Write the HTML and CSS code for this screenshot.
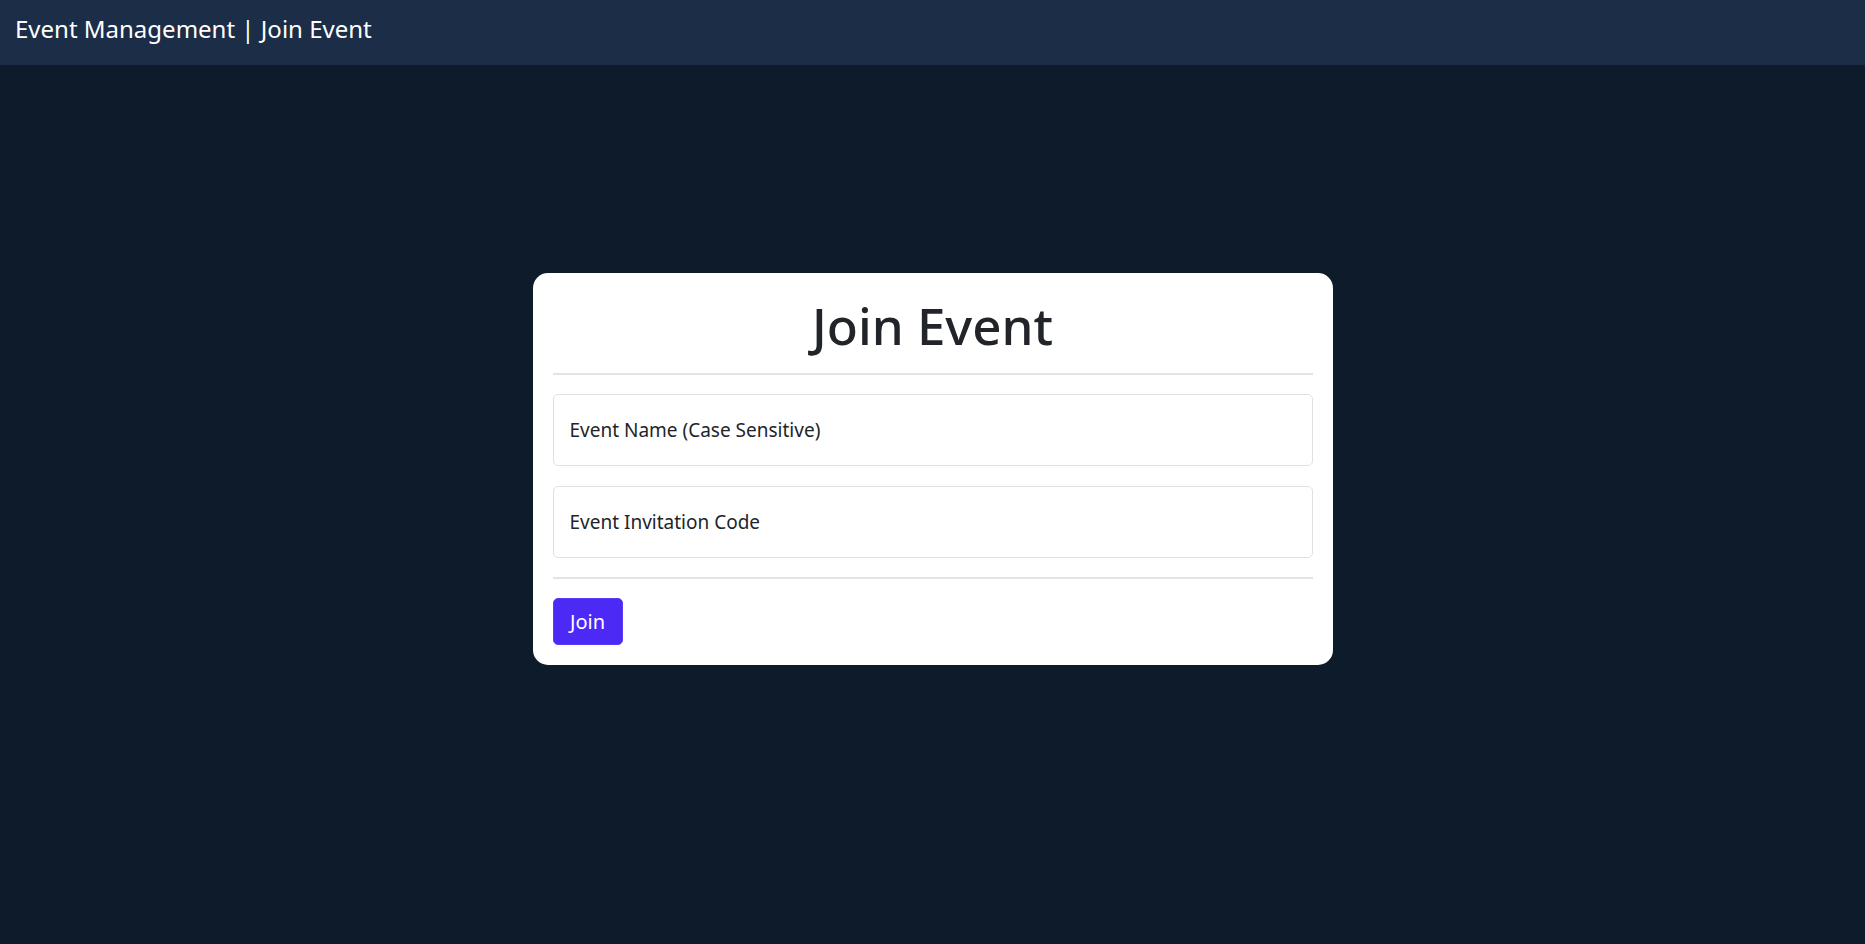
FILE: index.html
```html
<!DOCTYPE html>
<html lang="en">
<head>
<meta charset="utf-8">
<title>Event Management | Join Event</title>
<link rel="stylesheet" href="styles.css">
</head>
<body>
<nav class="navbar">
  <span class="brand">Event Management | Join Event</span>
</nav>
<main class="main">
  <form class="card">
    <h1 class="title">Join Event</h1>
    <hr class="rule">
    <input class="field" type="text" placeholder="Event Name (Case Sensitive)">
    <input class="field" type="text" placeholder="Event Invitation Code">
    <hr class="rule">
    <div class="actions">
      <button class="btn" type="button">Join</button>
    </div>
  </form>
</main>
</body>
</html>
```
FILE: styles.css
```css
* { box-sizing: border-box; }
html, body {
  margin: 0;
  height: 100%;
}
body {
  background: #0d1b2a;
  font-family: "Noto Sans", "Open Sans", sans-serif;
  color: #212529;
}
.navbar {
  height: 65px;
  background: #1b2d47;
  display: flex;
  align-items: center;
  padding: 0 15px;
}
.brand {
  color: #ffffff;
  font-size: 24px;
  line-height: 1;
  padding-bottom: 8px;
}
.main {
  display: flex;
  justify-content: center;
  padding-top: 208px;
}
.card {
  width: 800px;
  background: #ffffff;
  border-radius: 15px;
  padding: 20px;
  display: flex;
  flex-direction: column;
}
.title {
  margin: 0 0 16px;
  text-align: center;
  font-size: 51px;
  font-weight: 500;
  line-height: 64px;
  color: #212529;
}
.rule {
  margin: 0;
  border: 0;
  height: 2px;
  background: #e3e4e6;
}
.field {
  height: 72px;
  margin-top: 19px;
  border: 1px solid #dee2e6;
  border-radius: 5px;
  padding: 0 16px;
  font-family: inherit;
  font-size: 19px;
  color: #212529;
  outline: none;
}
.field + .field { margin-top: 20px; }
.field + .rule { margin-top: 19px; }
.field::placeholder {
  color: #212529;
  opacity: 1;
}
.actions {
  margin-top: 19px;
  display: flex;
}
.btn {
  height: 47px;
  width: 70px;
  padding: 0;
  background: #4d29f5;
  color: #ffffff;
  border: 1px solid #5a3cf7;
  border-radius: 5px;
  font-family: inherit;
  font-size: 20px;
  cursor: pointer;
}
```
